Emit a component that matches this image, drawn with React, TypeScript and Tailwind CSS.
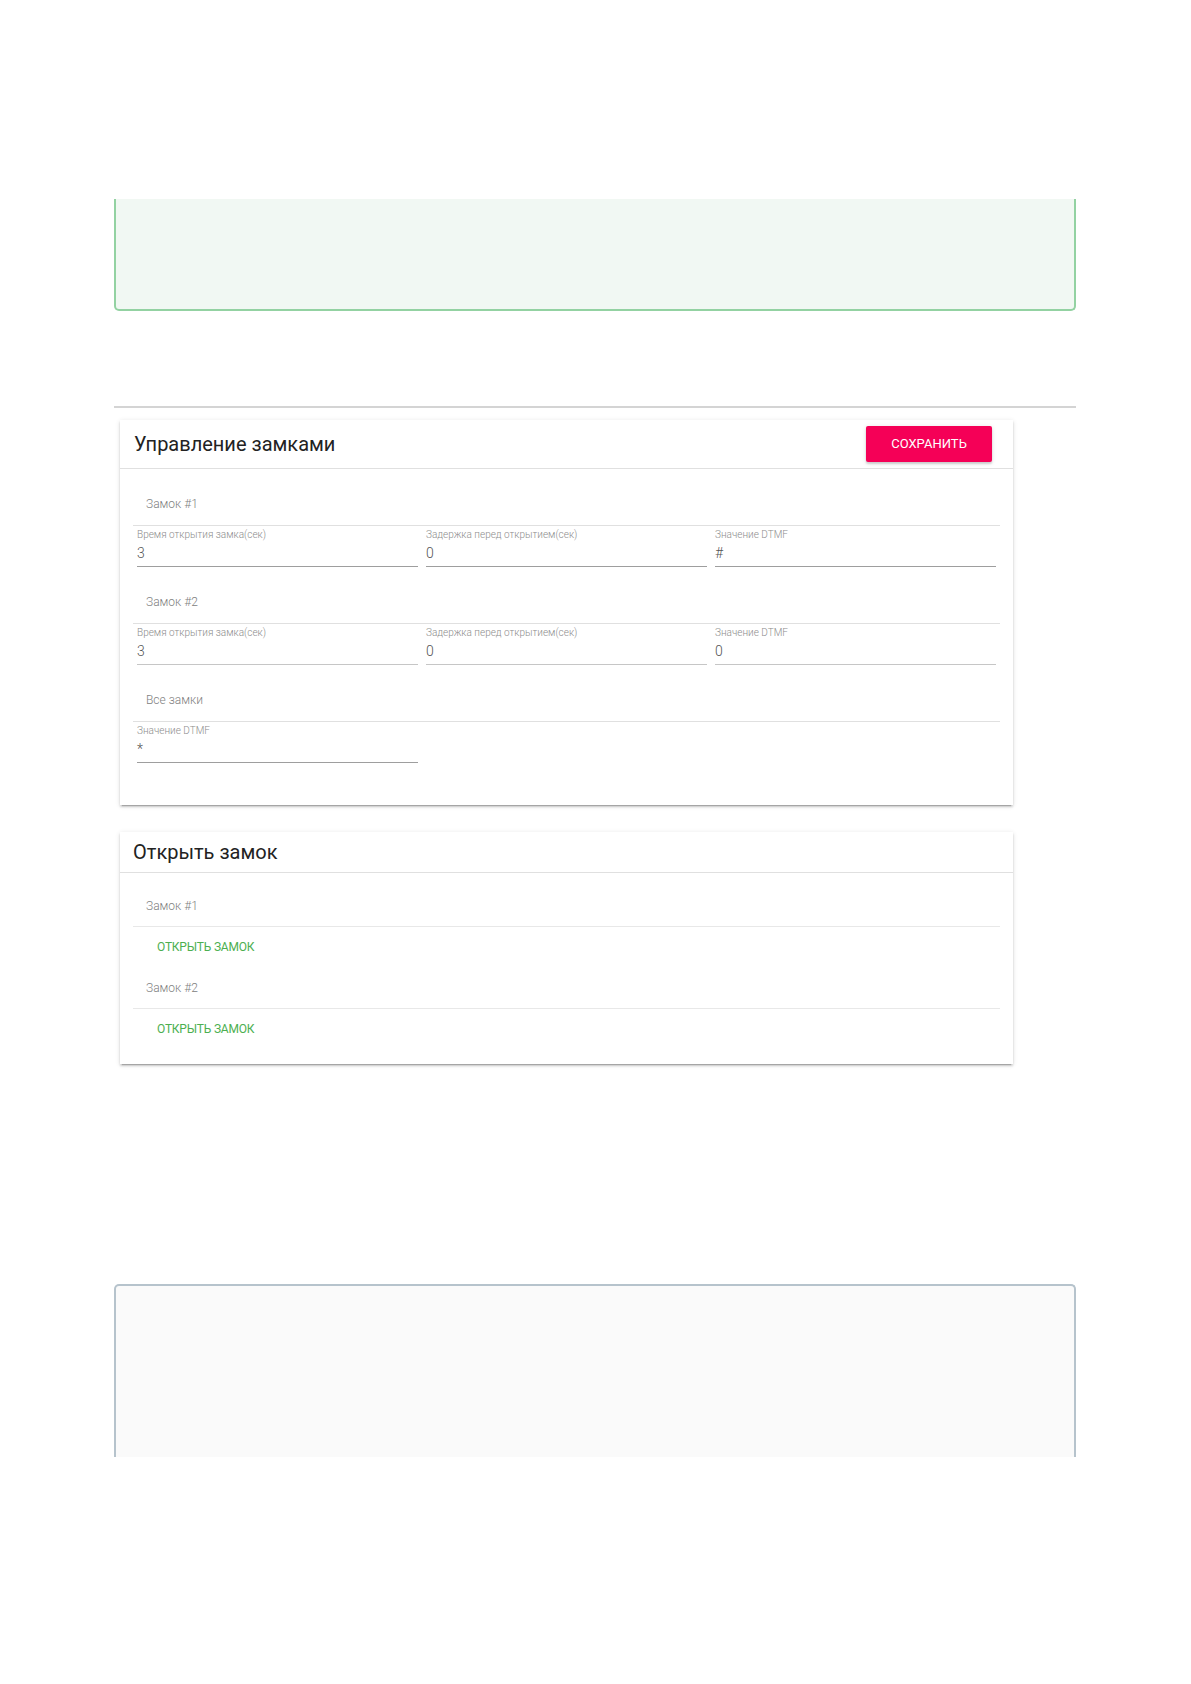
const lockSettings = [
  {
    title: 'Замок #1',
    line: 'border-[#9e9e9e]',
    fields: [
      { label: 'Время открытия замка(сек)', value: '3' },
      { label: 'Задержка перед открытием(сек)', value: '0' },
      { label: 'Значение DTMF', value: '#' },
    ],
  },
  {
    title: 'Замок #2',
    line: 'border-[#c6c6c6]',
    fields: [
      { label: 'Время открытия замка(сек)', value: '3' },
      { label: 'Задержка перед открытием(сек)', value: '0' },
      { label: 'Значение DTMF', value: '0' },
    ],
  },
  {
    title: 'Все замки',
    line: 'border-[#9e9e9e]',
    fields: [{ label: 'Значение DTMF', value: '*' }],
  },
];

function Field({ label, value, line }: { label: string; value: string; line: string }) {
  return (
    <div className="px-[4px]">
      <div className={`pt-[3px] pb-[1px] border-b ${line}`}>
        <div className="text-[10px] leading-[12px] text-[#8c8c8c] font-light">{label}</div>
        <div className="text-[14px] leading-[24px] text-[#555] font-light">{value}</div>
      </div>
    </div>
  );
}

function Card({ children }: { children: React.ReactNode }) {
  return (
    <div className="ml-[6px] w-[893px] bg-white shadow-[0_2px_2px_0_rgba(0,0,0,0.14),0_3px_1px_-2px_rgba(0,0,0,0.2),0_1px_5px_0_rgba(0,0,0,0.12)]">
      {children}
    </div>
  );
}

export default function App() {
  return (
    <div className="min-h-[1684px] bg-white font-['Roboto',sans-serif] pt-[199px]">
      <div className="ml-[114px] w-[962px]">
        {/* green note */}
        <div className="h-[112px] bg-[#f1f8f3] border-x-2 border-b-2 border-[#93d2a2] rounded-b-[5px]" />

        <div className="mt-[95px] h-[2px] bg-[#d4d4d4]" />

        {/* lock management */}
        <div className="mt-[12px]">
          <Card>
            <div className="h-[49px] flex items-center justify-between pl-[14px] pr-[21px] border-b border-[#e0e0e0]">
              <h2 className="text-[20px] text-[#222]">Управление замками</h2>
              <button className="h-[36px] w-[126px] rounded-[2px] bg-[#f50057] text-white text-[13px] uppercase shadow-[0_2px_2px_0_rgba(0,0,0,0.14),0_1px_5px_0_rgba(0,0,0,0.12)]">
                Сохранить
              </button>
            </div>
            <div className="px-[13px] pb-[42px]">
              {lockSettings.map((lock) => (
                <div key={lock.title}>
                  <div className="h-[57px] flex items-end pb-[13px] pl-[13px] border-b border-[#e0e0e0]">
                    <span className="text-[12px] leading-[16px] text-[#808080] font-light">{lock.title}</span>
                  </div>
                  <div className="grid grid-cols-3">
                    {lock.fields.map((f) => (
                      <Field key={f.label} label={f.label} value={f.value} line={lock.line} />
                    ))}
                  </div>
                </div>
              ))}
            </div>
          </Card>
        </div>

        {/* open lock */}
        <div className="mt-[27px]">
          <Card>
            <div className="h-[41px] flex items-center pl-[13px] border-b border-[#e0e0e0]">
              <h2 className="text-[20px] text-[#222]">Открыть замок</h2>
            </div>
            <div className="px-[13px] pt-[12px] pb-[15px]">
              {['Замок #1', 'Замок #2'].map((t) => (
                <div key={t}>
                  <div className="h-[42px] flex items-center pl-[13px] border-b border-[#e8e8e8]">
                    <span className="text-[12px] text-[#808080] font-light">{t}</span>
                  </div>
                  <button className="h-[40px] pl-[24px] text-[12px] text-[#4caf50] uppercase tracking-[-0.2px]">
                    Открыть замок
                  </button>
                </div>
              ))}
            </div>
          </Card>
        </div>

        {/* grey note */}
        <div className="mt-[220px] h-[173px] bg-[#fafafa] border-x-2 border-t-2 border-[#b6c3cc] rounded-t-[5px]" />
      </div>
    </div>
  );
}
